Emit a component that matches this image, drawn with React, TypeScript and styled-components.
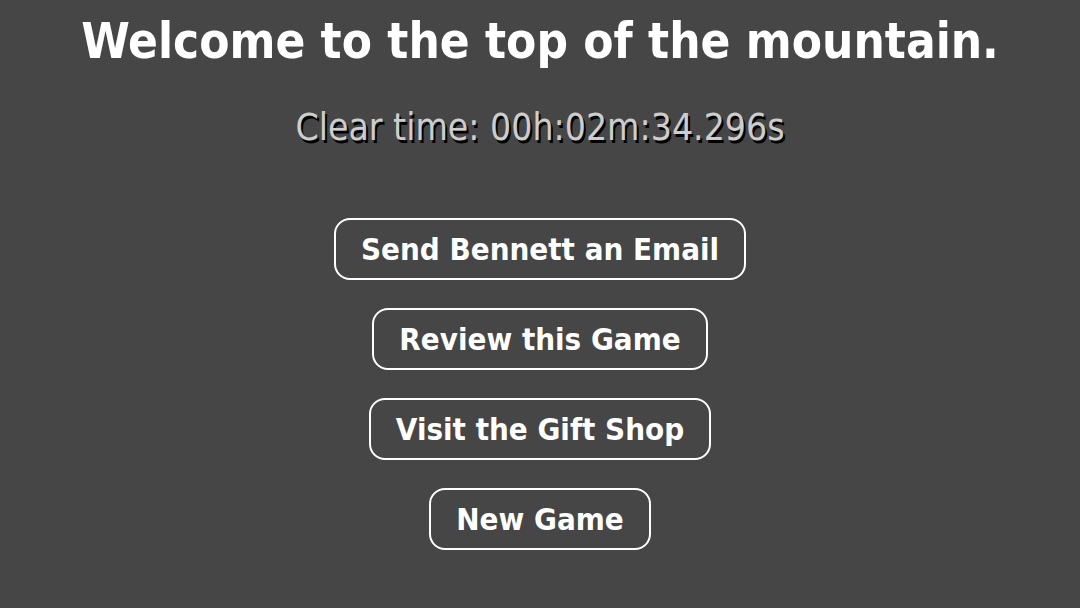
import styled, { createGlobalStyle } from "styled-components";

const GlobalStyle = createGlobalStyle`
  html, body {
    margin: 0;
    padding: 0;
    background-color: #464646;
  }
`

const links = [
  "Send Bennett an Email",
  "Review this Game",
  "Visit the Gift Shop",
  "New Game",
]

function App() {
  return (
    <>
      <GlobalStyle />
      <Page>
        <Title>Welcome to the top of the mountain.</Title>
        <ClearTime>Clear time: 00h:02m:34.296s</ClearTime>
        <ButtonList>
          {links.map((label) => (
            <MenuButton key={label}>{label}</MenuButton>
          ))}
        </ButtonList>
      </Page>
    </>
  )
}

const Page = styled.div`
  width: 1080px;
  height: 608px;
  display: flex;
  flex-direction: column;
  align-items: center;
  font-family: "DejaVu Sans Condensed", "DejaVu Sans", sans-serif;
  font-stretch: condensed;
  color: #ffffff;
  overflow: hidden;
`

const Title = styled.h1`
  margin: 12px 0 0;
  font-size: 49px;
  font-weight: 700;
  line-height: 60px;
  white-space: nowrap;
`

const ClearTime = styled.div`
  margin-top: 34px;
  font-size: 37px;
  line-height: 44px;
  color: #cdcdcd;
  text-shadow: 2px 3px 0 #000000;
  white-space: nowrap;
`

const ButtonList = styled.div`
  margin-top: 68px;
  display: flex;
  flex-direction: column;
  align-items: center;
  gap: 28px;
`

const MenuButton = styled.button`
  height: 62px;
  padding: 0 25px;
  border: 2px solid #ffffff;
  border-radius: 16px;
  background-color: transparent;
  color: #ffffff;
  font-family: inherit;
  font-stretch: condensed;
  font-size: 31px;
  font-weight: 700;
  white-space: nowrap;
  cursor: pointer;
`

export default App;
